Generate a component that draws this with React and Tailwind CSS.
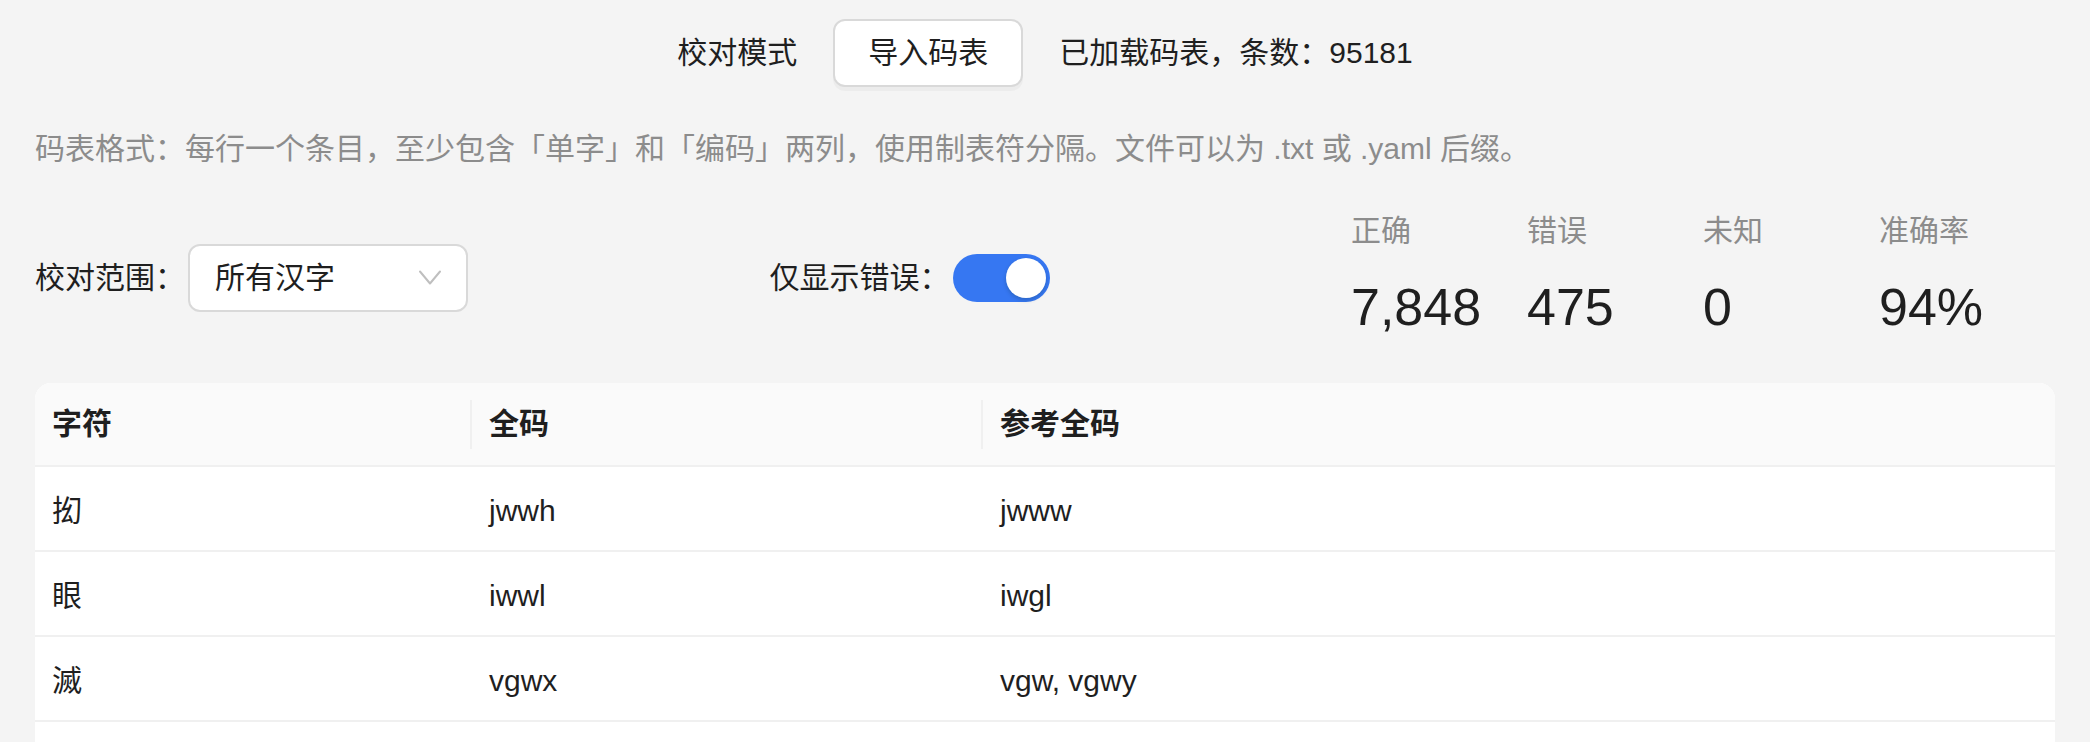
const rows = [
  { ch: "抝", code: "jwwh", ref: "jwww" },
  { ch: "眼", code: "iwwl", ref: "iwgl" },
  { ch: "滅", code: "vgwx", ref: "vgw, vgwy" },
  { ch: "", code: "", ref: "" },
];

const stats = [
  { label: "正确", value: "7,848" },
  { label: "错误", value: "475" },
  { label: "未知", value: "0" },
  { label: "准确率", value: "94%" },
];

function Chevron() {
  return (
    <svg width="22" height="15" viewBox="0 0 22 15" fill="none">
      <polyline points="1,1.5 11,13.5 21,1.5" stroke="#bfbfbf" strokeWidth="2" strokeLinecap="round" strokeLinejoin="round" />
    </svg>
  );
}

export default function App() {
  return (
    <div className="min-h-[742px] w-full bg-[#f4f4f4] px-[35px] font-['Liberation_Sans','Noto_Sans_CJK_SC',sans-serif] text-[#1f1f1f]">
      {/* Top bar */}
      <div className="flex items-center justify-center gap-[36px] pt-[19px]">
        <span className="text-[30px] leading-[42px]">校对模式</span>
        <button className="h-[68px] px-[33px] bg-white border-2 border-[#d9d9d9] rounded-[12px] text-[30px] leading-[42px] text-[#1f1f1f] shadow-[0_4px_0_rgba(0,0,0,0.03)]">
          导入码表
        </button>
        <span className="text-[30px] leading-[42px]">已加载码表，条数：95181</span>
      </div>

      {/* Format hint */}
      <div className="mt-[41px] text-[30px] leading-[42px] text-[#8c8c8c]">
        码表格式：每行一个条目，至少包含「单字」和「编码」两列，使用制表符分隔。文件可以为 .txt 或 .yaml 后缀。
      </div>

      {/* Controls + stats */}
      <div className="mt-[40px] flex items-center justify-between">
        <div className="flex items-center gap-[3px] mt-[8px]">
          <span className="text-[30px] leading-[42px]">校对范围：</span>
          <div className="w-[280px] h-[68px] bg-white border-2 border-[#d9d9d9] rounded-[12px] flex items-center justify-between pl-[25px] pr-[25px]">
            <span className="text-[30px] leading-[42px]">所有汉字</span>
            <Chevron />
          </div>
        </div>

        <div className="flex items-center gap-[3px] mt-[8px]">
          <span className="text-[30px] leading-[42px]">仅显示错误：</span>
          <div className="w-[97px] h-[48px] rounded-full bg-[#3677f2] p-[4px] flex justify-end">
            <div className="w-[40px] h-[40px] rounded-full bg-white shadow-[0_2px_4px_rgba(0,35,11,0.2)]" />
          </div>
        </div>

        <div className="flex">
          {stats.map((s) => (
            <div key={s.label} className="w-[176px]">
              <div className="text-[30px] leading-[42px] text-[#8c8c8c]">{s.label}</div>
              <div className="mt-[25px] text-[52px] leading-[60px] text-[#1f1f1f]">{s.value}</div>
            </div>
          ))}
        </div>
      </div>

      {/* Table */}
      <div className="mt-[46px] rounded-t-[16px] overflow-hidden bg-white">
        <div className="flex items-center h-[84px] bg-[#fafafa] border-b-2 border-[#f0f0f0] font-bold text-[30px] leading-[42px]">
          <div className="w-[435px] pl-[17px]">字符</div>
          <div className="w-[511px] flex items-center">
            <div className="w-[2px] h-[49px] bg-[#f0f0f0]" />
            <span className="pl-[17px]">全码</span>
          </div>
          <div className="flex-1 flex items-center">
            <div className="w-[2px] h-[49px] bg-[#f0f0f0]" />
            <span className="pl-[17px]">参考全码</span>
          </div>
        </div>
        {rows.map((r, i) => (
          <div key={i} className="flex items-center h-[85px] pt-[5px] border-b-2 border-[#f0f0f0] text-[30px] leading-[42px]">
            <div className="w-[435px] pl-[17px]">{r.ch}</div>
            <div className="w-[511px] pl-[19px]">{r.code}</div>
            <div className="flex-1 pl-[19px]">{r.ref}</div>
          </div>
        ))}
      </div>
    </div>
  );
}
